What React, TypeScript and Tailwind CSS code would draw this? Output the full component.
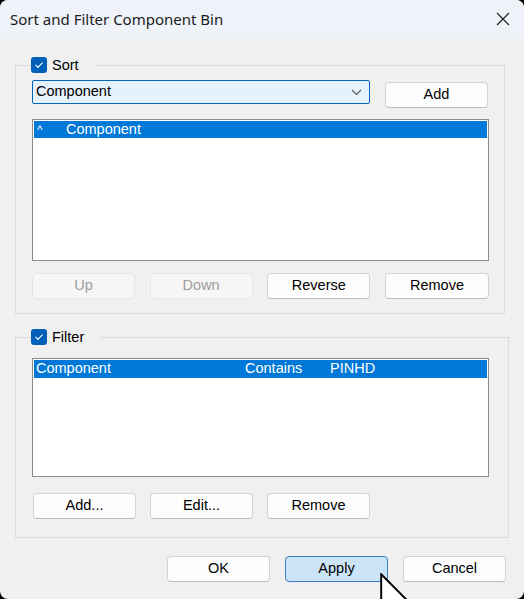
import { ReactNode } from 'react';

const ui = { fontFamily: '"Liberation Sans", Arial, sans-serif' };
const titleFont = { fontFamily: '"Noto Sans", "Open Sans", sans-serif' };

function Check() {
    return (
        <span className="flex h-4 w-4 items-center justify-center rounded-[3px] bg-[#005fb8]">
            <svg width="10" height="10" viewBox="0 0 10 10" fill="none">
                <path d="M1.8 5.2 L4 7.3 L8.3 2.8" stroke="white" strokeWidth="1.1" strokeLinecap="round" strokeLinejoin="round" />
            </svg>
        </span>
    );
}

function Button({ children, disabled, primary, className = '' }: { children: ReactNode; disabled?: boolean; primary?: boolean; className?: string }) {
    const tone = disabled
        ? 'border-[#e6e6e6] bg-[#f6f6f6] text-[#9d9d9d]'
        : primary
          ? 'border-[#3c7fc4] bg-[#cce4f7] text-black'
          : 'border-[#d3d3d3] border-b-[#bdbdbd] bg-[#fdfdfd] text-black';
    return (
        <div className={`flex h-[26px] w-[103px] items-center justify-center rounded-[4px] border text-[14.5px] ${tone} ${className}`}>
            {children}
        </div>
    );
}

function Group({ label, className = '', children }: { label: string; className?: string; children: ReactNode }) {
    return (
        <fieldset className={`border border-[#dcdcdc] ${className}`}>
            <legend className="-ml-px flex items-center gap-[5px] pr-[16px]">
                <Check />
                <span className="text-[14.5px] leading-4 text-black">{label}</span>
            </legend>
            {children}
        </fieldset>
    );
}

export default function App() {
    return (
        <div className="h-[599px] w-[524px] overflow-hidden bg-black" style={ui}>
            <div className="relative flex h-full flex-col overflow-hidden rounded-[8px] bg-[#f0f0f0]">
                {/* title bar */}
                <div className="flex h-[38px] shrink-0 items-center justify-between bg-[#eff3f9] pr-[14px] pl-[10px]">
                    <span className="text-[15px] text-[#1b1b1b]" style={titleFont}>
                        Sort and Filter Component Bin
                    </span>
                    <svg width="14" height="14" viewBox="0 0 14 14">
                        <path d="M1 1 L13 13 M13 1 L1 13" stroke="#222" strokeWidth="1.2" />
                    </svg>
                </div>

                <div className="flex flex-col px-[15px] pt-[19px]">
                    <Group label="Sort" className="mr-[4px] pb-[14px] pl-4">
                        <div className="mt-[7px] flex items-start">
                            <div className="flex h-6 w-[338px] items-center justify-between rounded-[2px] border border-[#0067c0] bg-[#e5f1fb] pr-[7px] pl-[3px] text-[14.5px] text-black">
                                <span>Component</span>
                                <svg width="11" height="7" viewBox="0 0 11 7" fill="none">
                                    <path d="M1 1 L5.5 5.5 L10 1" stroke="#555" strokeWidth="1.1" />
                                </svg>
                            </div>
                            <Button className="mt-[2px] ml-[15px] h-[25px]">Add</Button>
                        </div>
                        <div className="mt-[11px] h-[142px] w-[457px] border border-[#8a8a8a] bg-white p-px">
                            <div className="flex h-[17px] items-center bg-[#0078d7] text-[14.5px] text-white">
                                <span className="w-[32px] pl-[3px] text-[12px]">^</span>
                                <span>Component</span>
                            </div>
                        </div>
                        <div className="mt-3 flex w-[457px] justify-between">
                            <Button disabled className="w-[102px]">Up</Button>
                            <Button disabled className="w-[102px]">Down</Button>
                            <Button>Reverse</Button>
                            <Button className="w-[104px]">Remove</Button>
                        </div>
                    </Group>

                    <Group label="Filter" className="mt-[15px] pb-[18px] pl-4">
                        <div className="mt-[13px] h-[119px] w-[457px] border border-[#8a8a8a] bg-white p-px">
                            <div className="flex h-[18px] items-center bg-[#0078d7] text-[14.5px] text-white">
                                <span className="w-[211px] pl-[2px]">Component</span>
                                <span className="w-[85px]">Contains</span>
                                <span>PINHD</span>
                            </div>
                        </div>
                        <div className="mt-[16px] ml-px flex gap-[14px]">
                            <Button>Add...</Button>
                            <Button>Edit...</Button>
                            <Button>Remove</Button>
                        </div>
                    </Group>

                    <div className="mt-[18px] flex justify-end gap-[15px] pr-[3px]">
                        <Button>OK</Button>
                        <Button primary>Apply</Button>
                        <Button>Cancel</Button>
                    </div>
                </div>

                {/* mouse pointer over Apply */}
                <svg className="absolute top-[573px] left-[380px]" width="30" height="48" viewBox="0 0 12.5 20" fill="none">
                    <path d="M0.5 0.5 L0.5 16 L4.2 12.4 L6.8 18.6 L9 17.6 L6.5 11.6 L11.5 11.6 Z" fill="white" stroke="black" strokeWidth="0.8" strokeLinejoin="miter" />
                </svg>
            </div>
        </div>
    );
}
